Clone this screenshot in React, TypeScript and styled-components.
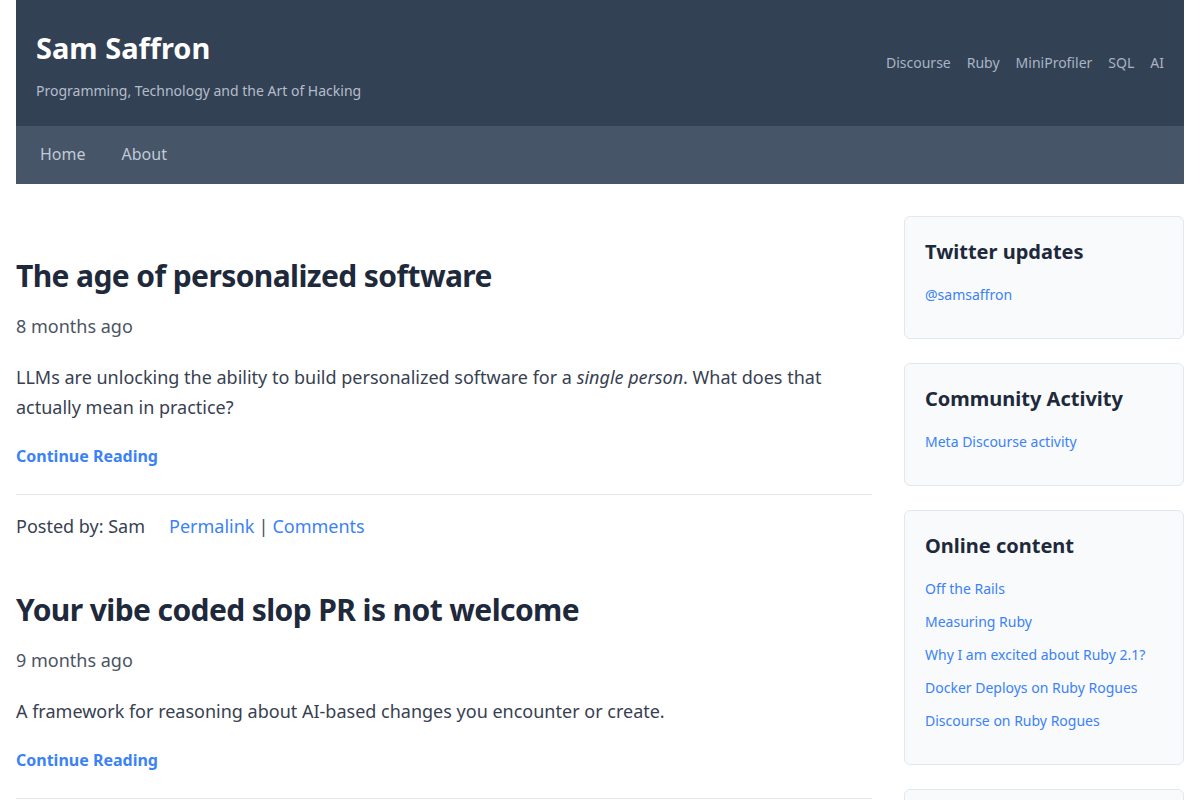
import React from 'react';
import styled, { createGlobalStyle } from 'styled-components';

const GlobalStyle = createGlobalStyle`
  * { box-sizing: border-box; }
  html, body {
    margin: 0;
    padding: 0;
    background: #ffffff;
    font-family: 'Noto Sans', 'Open Sans', sans-serif;
    color: #374151;
  }
  a { text-decoration: none; }
`;

const Page = styled.div`
  padding: 0 16px;
`;

const Header = styled.header`
  background: #334155;
  height: 126px;
  padding: 0 20px;
  display: flex;
  justify-content: space-between;
  align-items: flex-start;
`;

const Brand = styled.div`
  padding-top: 26px;
`;

const SiteTitle = styled.h1`
  margin: 0;
  font-size: 29px;
  line-height: 44px;
  font-weight: 700;
  color: #ffffff;
`;

const Tagline = styled.p`
  margin: 11px 0 0;
  font-size: 14px;
  line-height: 20px;
  color: #b3bdca;
`;

const TopLinks = styled.nav`
  display: flex;
  gap: 16px;
  padding-top: 53px;
`;

const TopLink = styled.a`
  font-size: 14px;
  line-height: 20px;
  color: #a9b4c4;
`;

const NavBar = styled.nav`
  background: #475569;
  height: 58px;
  padding: 0 24px 2px;
  display: flex;
  align-items: center;
  gap: 36px;
`;

const NavLink = styled.a`
  font-size: 16px;
  color: #c1cad6;
`;

const Layout = styled.div`
  display: flex;
  gap: 32px;
  padding-top: 32px;
`;

const Main = styled.main`
  flex: 1;
  min-width: 0;
`;

const Article = styled.article`
  padding-bottom: 10px;
`;

const PostTitle = styled.h2`
  margin: 40px 0 17px;
  font-size: 30px;
  line-height: 40px;
  letter-spacing: -0.6px;
  font-weight: 700;
  color: #1e293b;
`;

const PostDate = styled.div`
  font-size: 18px;
  line-height: 27px;
  color: #4b5563;
  margin-bottom: 22px;
`;

const Excerpt = styled.p`
  margin: 0 0 22px;
  font-size: 18px;
  line-height: 30px;
  color: #374151;
`;

const ContinueLink = styled.a`
  display: block;
  font-size: 16px;
  line-height: 24px;
  font-weight: 700;
  color: #3b82f6;
`;

const Divider = styled.hr`
  border: none;
  border-top: 1px solid #e5e7eb;
  margin: 26px 0 18px;
`;

const PostFooter = styled.div`
  display: flex;
  align-items: center;
  font-size: 18px;
  line-height: 27px;
  color: #374151;
`;

const Author = styled.span`
  margin-right: 24px;
`;

const FooterLink = styled.a`
  color: #3b82f6;
`;

const Separator = styled.span`
  color: #4b5563;
  margin: 0 4px;
`;

const Sidebar = styled.aside`
  width: 280px;
  flex-shrink: 0;
  display: flex;
  flex-direction: column;
  gap: 24px;
`;

const Card = styled.section`
  background: #f8fafc;
  border: 1px solid #e2e8f0;
  border-radius: 6px;
  padding: 20px 20px 21px;
`;

const CardTitle = styled.h3`
  margin: 0 0 17px;
  font-size: 20px;
  line-height: 30px;
  font-weight: 700;
  color: #1e293b;
`;

const LinkList = styled.ul`
  list-style: none;
  margin: 0;
  padding: 0;
`;

const LinkItem = styled.li`
  font-size: 14px;
  line-height: 21px;
  margin-bottom: 12px;
`;

const CardLink = styled.a`
  color: #3b82f6;
`;

const posts = [
  {
    title: 'The age of personalized software',
    date: '8 months ago',
    excerpt: (
      <>
        LLMs are unlocking the ability to build personalized software for a <em>single person</em>. What does that actually mean in practice?
      </>
    ),
  },
  {
    title: 'Your vibe coded slop PR is not welcome',
    date: '9 months ago',
    excerpt: <>A framework for reasoning about AI-based changes you encounter or create.</>,
  },
];

const cards = [
  { title: 'Twitter updates', links: ['@samsaffron'] },
  { title: 'Community Activity', links: ['Meta Discourse activity'] },
  {
    title: 'Online content',
    links: [
      'Off the Rails',
      'Measuring Ruby',
      'Why I am excited about Ruby 2.1?',
      'Docker Deploys on Ruby Rogues',
      'Discourse on Ruby Rogues',
    ],
  },
  { title: 'Archives', links: ['2025', '2024'] },
];

export default function App() {
  return (
    <>
      <GlobalStyle />
      <Page>
        <Header>
          <Brand>
            <SiteTitle>Sam Saffron</SiteTitle>
            <Tagline>Programming, Technology and the Art of Hacking</Tagline>
          </Brand>
          <TopLinks>
            {['Discourse', 'Ruby', 'MiniProfiler', 'SQL', 'AI'].map((t) => (
              <TopLink key={t} href="#">{t}</TopLink>
            ))}
          </TopLinks>
        </Header>
        <NavBar>
          <NavLink href="#">Home</NavLink>
          <NavLink href="#">About</NavLink>
        </NavBar>
        <Layout>
          <Main>
            {posts.map((p) => (
              <Article key={p.title}>
                <PostTitle>{p.title}</PostTitle>
                <PostDate>{p.date}</PostDate>
                <Excerpt>{p.excerpt}</Excerpt>
                <ContinueLink href="#">Continue Reading</ContinueLink>
                <Divider />
                <PostFooter>
                  <Author>Posted by: Sam</Author>
                  <FooterLink href="#">Permalink</FooterLink>
                  <Separator>|</Separator>
                  <FooterLink href="#">Comments</FooterLink>
                </PostFooter>
              </Article>
            ))}
          </Main>
          <Sidebar>
            {cards.map((c) => (
              <Card key={c.title}>
                <CardTitle>{c.title}</CardTitle>
                <LinkList>
                  {c.links.map((l) => (
                    <LinkItem key={l}>
                      <CardLink href="#">{l}</CardLink>
                    </LinkItem>
                  ))}
                </LinkList>
              </Card>
            ))}
          </Sidebar>
        </Layout>
      </Page>
    </>
  );
}
